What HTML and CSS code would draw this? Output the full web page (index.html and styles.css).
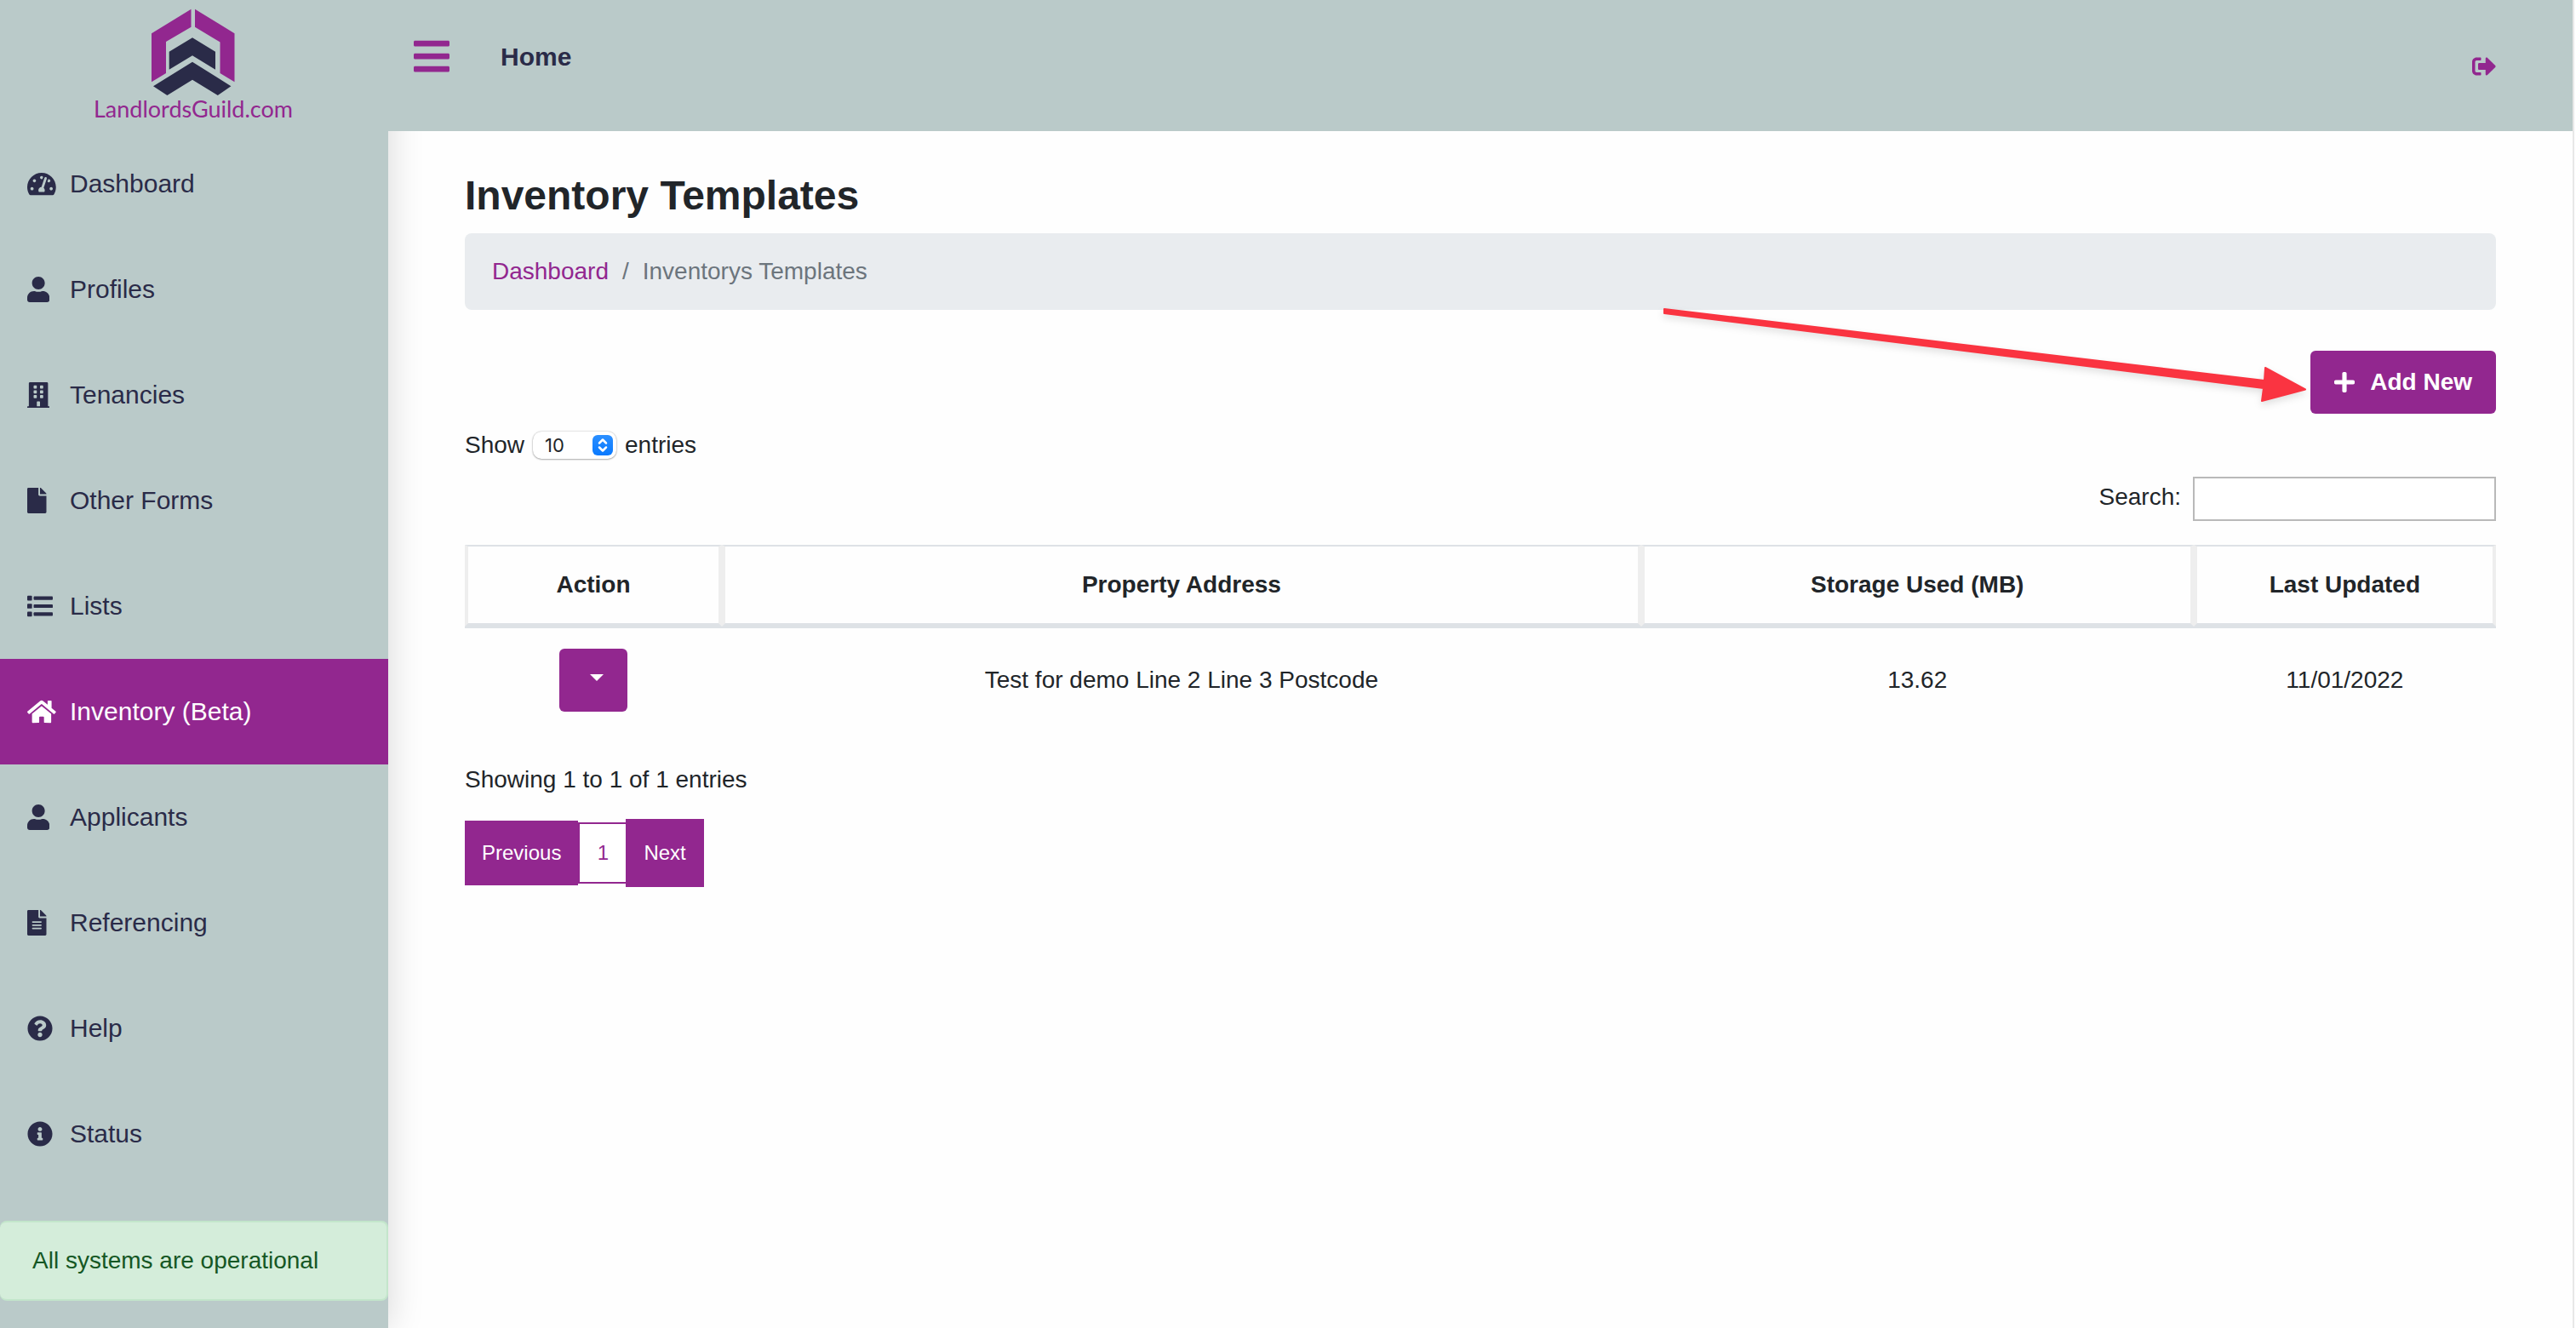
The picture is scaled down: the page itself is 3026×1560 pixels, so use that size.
FILE: index.html
```html
<!DOCTYPE html>
<html lang="en">
<head>
<meta charset="utf-8">
<meta name="viewport" content="width=device-width, initial-scale=1">
<title>Inventory Templates - LandlordsGuild.com</title>
<link rel="stylesheet" href="styles.css">
</head>
<body>
<div class="app">
  <aside class="sidebar">
    <a class="brand" href="#">
      <svg class="brand-mark" viewBox="178 10 98 102" aria-hidden="true">
        <path fill="#92278f" d="M178 39.3L224.5 10.7V31.7L195 49V86L178 96.3ZM229 10.7L275.5 39.3V96.3L258.5 86V49.5L229 31.7Z"/>
        <path fill="#2a2b48" d="M226 44.3L253 60.7V81.7L226 65.3L198.7 81.7V60.7ZM226 72.7L271.4 101.3L255.8 112L226 93.7L196.4 112L180 101.3Z"/>
      </svg>
      <span class="brand-name">LandlordsGuild.com</span>
    </a>
    <nav class="menu" aria-label="Main">
      <a class="menu-item" href="#">
        <span class="menu-icon"><svg class="icon" viewBox="0 0 576 512"><path d="M288 32C128.94 32 0 160.94 0 320c0 52.8 14.25 102.26 39.06 144.8 5.61 9.62 16.3 15.2 27.44 15.2h443c11.14 0 21.83-5.58 27.44-15.2C561.75 422.26 576 372.8 576 320c0-159.06-128.94-288-288-288zm0 64c14.71 0 26.58 10.13 30.32 23.65-1.11 2.26-2.64 4.23-3.45 6.67l-9.22 27.67c-5.13 3.49-10.97 6.01-17.64 6.01-17.67 0-32-14.33-32-32S270.33 96 288 96zM96 384c-17.67 0-32-14.33-32-32s14.33-32 32-32 32 14.33 32 32-14.33 32-32 32zm48-160c-17.67 0-32-14.33-32-32s14.33-32 32-32 32 14.33 32 32-14.33 32-32 32zm246.77-72.41l-61.33 184C343.13 347.33 352 364.54 352 384c0 11.72-3.38 22.55-8.88 32H232.88c-5.5-9.45-8.88-20.28-8.88-32 0-33.94 26.5-61.43 59.9-63.59l61.34-184.01c4.17-12.56 17.73-19.45 30.36-15.17 12.57 4.19 19.35 17.79 15.17 30.36zm14.66 57.2l15.52-46.55c3.47-1.29 7.13-2.23 11.05-2.23 17.67 0 32 14.33 32 32s-14.33 32-32 32c-11.38-.01-20.89-6.28-26.57-15.22zM480 384c-17.67 0-32-14.33-32-32s14.33-32 32-32 32 14.33 32 32-14.33 32-32 32z"/></svg></span>
        Dashboard
      </a>
      <a class="menu-item" href="#">
        <span class="menu-icon"><svg class="icon" viewBox="0 0 448 512"><path d="M224 256c70.7 0 128-57.3 128-128S294.7 0 224 0 96 57.3 96 128s57.3 128 128 128zm89.6 32h-16.7c-22.2 10.2-46.9 16-72.9 16s-50.6-5.8-72.9-16h-16.7C60.2 288 0 348.2 0 422.4V464c0 26.5 21.5 48 48 48h352c26.5 0 48-21.5 48-48v-41.6c0-74.2-60.2-134.4-134.4-134.4z"/></svg></span>
        Profiles
      </a>
      <a class="menu-item" href="#">
        <span class="menu-icon"><svg class="icon" viewBox="0 0 448 512"><path fill-rule="evenodd" d="M436 480h-20V24c0-13.255-10.745-24-24-24H56C42.745 0 32 10.745 32 24v456H12c-6.627 0-12 5.373-12 12v20h448v-20c0-6.627-5.373-12-12-12zM140 64h40q12 0 12 12v40q0 12-12 12h-40q-12 0-12-12V76q0-12 12-12zM268 64h40q12 0 12 12v40q0 12-12 12h-40q-12 0-12-12V76q0-12 12-12zM140 160h40q12 0 12 12v40q0 12-12 12h-40q-12 0-12-12v-40q0-12 12-12zM268 160h40q12 0 12 12v40q0 12-12 12h-40q-12 0-12-12v-40q0-12 12-12zM140 256h40q12 0 12 12v40q0 12-12 12h-40q-12 0-12-12v-40q0-12 12-12zM268 256h40q12 0 12 12v40q0 12-12 12h-40q-12 0-12-12v-40q0-12 12-12zM204 384h40q12 0 12 12v84h-64v-84q0-12 12-12z"/></svg></span>
        Tenancies
      </a>
      <a class="menu-item" href="#">
        <span class="menu-icon"><svg class="icon" viewBox="0 0 384 512"><path d="M224 136V0H24C10.7 0 0 10.7 0 24v464c0 13.3 10.7 24 24 24h336c13.3 0 24-10.7 24-24V160H248c-13.2 0-24-10.8-24-24zm160-14.1v6.1H256V0h6.1c6.4 0 12.5 2.5 17 7l97.9 98c4.5 4.5 7 10.6 7 16.9z"/></svg></span>
        Other Forms
      </a>
      <a class="menu-item" href="#">
        <span class="menu-icon"><svg class="icon" viewBox="0 0 512 512"><rect x="0" y="48" width="96" height="96" rx="16"/><rect x="0" y="208" width="96" height="96" rx="16"/><rect x="0" y="368" width="96" height="96" rx="16"/><rect x="128" y="60" width="384" height="72" rx="16"/><rect x="128" y="220" width="384" height="72" rx="16"/><rect x="128" y="380" width="384" height="72" rx="16"/></svg></span>
        Lists
      </a>
      <a class="menu-item is-active" href="#" aria-current="page">
        <span class="menu-icon"><svg class="icon" viewBox="0 0 576 512"><path d="M280.37 148.26L96 300.11V464a16 16 0 0 0 16 16l112.06-.29a16 16 0 0 0 15.92-16V368a16 16 0 0 1 16-16h64a16 16 0 0 1 16 16v95.64a16 16 0 0 0 16 16.05L464 480a16 16 0 0 0 16-16V300L295.67 148.26a12.19 12.19 0 0 0-15.3 0zM571.6 251.47L488 182.56V44.05a12 12 0 0 0-12-12h-56a12 12 0 0 0-12 12v72.61L318.47 43a48 48 0 0 0-61 0L4.34 251.47a12 12 0 0 0-1.6 16.9l25.5 31A12 12 0 0 0 45.15 301l235.22-193.74a12.19 12.19 0 0 1 15.3 0L530.9 301a12 12 0 0 0 16.9-1.6l25.5-31a12 12 0 0 0-1.7-16.93z"/></svg></span>
        Inventory (Beta)
      </a>
      <a class="menu-item" href="#">
        <span class="menu-icon"><svg class="icon" viewBox="0 0 448 512"><path d="M224 256c70.7 0 128-57.3 128-128S294.7 0 224 0 96 57.3 96 128s57.3 128 128 128zm89.6 32h-16.7c-22.2 10.2-46.9 16-72.9 16s-50.6-5.8-72.9-16h-16.7C60.2 288 0 348.2 0 422.4V464c0 26.5 21.5 48 48 48h352c26.5 0 48-21.5 48-48v-41.6c0-74.2-60.2-134.4-134.4-134.4z"/></svg></span>
        Applicants
      </a>
      <a class="menu-item" href="#">
        <span class="menu-icon"><svg class="icon" viewBox="0 0 384 512"><path d="M224 136V0H24C10.7 0 0 10.7 0 24v464c0 13.3 10.7 24 24 24h336c13.3 0 24-10.7 24-24V160H248c-13.2 0-24-10.8-24-24zm64 236c0 6.6-5.4 12-12 12H108c-6.6 0-12-5.4-12-12v-8c0-6.6 5.4-12 12-12h168c6.6 0 12 5.4 12 12v8zm0-64c0 6.6-5.4 12-12 12H108c-6.6 0-12-5.4-12-12v-8c0-6.6 5.4-12 12-12h168c6.6 0 12 5.4 12 12v8zm0-72v8c0 6.6-5.4 12-12 12H108c-6.6 0-12-5.4-12-12v-8c0-6.6 5.4-12 12-12h168c6.6 0 12 5.4 12 12zm96-114.1v6.1H256V0h6.1c6.4 0 12.5 2.5 17 7l97.9 98c4.5 4.5 7 10.6 7 16.9z"/></svg></span>
        Referencing
      </a>
      <a class="menu-item" href="#">
        <span class="menu-icon"><svg class="icon" viewBox="0 0 512 512"><path d="M504 256c0 136.997-111.043 248-248 248S8 392.997 8 256C8 119.083 119.043 8 256 8s248 111.083 248 248zM262.655 90c-54.497 0-89.255 22.957-116.549 63.758-3.536 5.286-2.353 12.415 2.715 16.258l34.699 26.31c5.205 3.947 12.621 3.008 16.665-2.122 17.864-22.658 30.113-35.797 57.303-35.797 20.429 0 45.698 13.148 45.698 32.958 0 14.976-12.363 22.667-32.534 33.976C247.128 238.528 216 254.941 216 296v4c0 6.627 5.373 12 12 12h56c6.627 0 12-5.373 12-12v-1.333c0-28.462 83.186-29.647 83.186-106.667 0-58.002-60.165-102-116.531-102zM256 338c-25.365 0-46 20.635-46 46 0 25.364 20.635 46 46 46s46-20.636 46-46c0-25.365-20.635-46-46-46z"/></svg></span>
        Help
      </a>
      <a class="menu-item" href="#">
        <span class="menu-icon"><svg class="icon" viewBox="0 0 512 512"><path d="M256 8C119.043 8 8 119.083 8 256c0 136.997 111.043 248 248 248s248-111.003 248-248C504 119.083 392.957 8 256 8zm0 110c23.196 0 42 18.804 42 42s-18.804 42-42 42-42-18.804-42-42 18.804-42 42-42zm56 254c0 6.627-5.373 12-12 12h-88c-6.627 0-12-5.373-12-12v-24c0-6.627 5.373-12 12-12h12v-64h-12c-6.627 0-12-5.373-12-12v-24c0-6.627 5.373-12 12-12h64c6.627 0 12 5.373 12 12v100h12c6.627 0 12 5.373 12 12v24z"/></svg></span>
        Status
      </a>
    </nav>
    <div class="alert" role="status">All systems are operational</div>
  </aside>

  <div class="page">
    <header class="topbar">
      <button class="menu-toggle" type="button" aria-label="Toggle menu">
        <svg class="icon-bars" viewBox="0 0 448 512"><path d="M16 132h416c8.837 0 16-7.163 16-16V76c0-8.837-7.163-16-16-16H16C7.163 60 0 67.163 0 76v40c0 8.837 7.163 16 16 16zm0 160h416c8.837 0 16-7.163 16-16v-40c0-8.837-7.163-16-16-16H16c-8.837 0-16 7.163-16 16v40c0 8.837 7.163 16 16 16zm0 160h416c8.837 0 16-7.163 16-16v-40c0-8.837-7.163-16-16-16H16c-8.837 0-16 7.163-16 16v40c0 8.837 7.163 16 16 16z"/></svg>
      </button>
      <a class="home-link" href="#">Home</a>
      <a class="logout" href="#" aria-label="Log out">
        <svg class="icon-logout" viewBox="0 0 512 512"><path d="M497 273L329 441c-15 15-41 4.5-41-17v-96H152c-13.3 0-24-10.7-24-24v-96c0-13.3 10.7-24 24-24h136V88c0-21.4 25.9-32 41-17l168 168c9.3 9.4 9.3 24.6 0 34zM192 436v-40c0-6.6-5.4-12-12-12H96c-17.7 0-32-14.3-32-32V160c0-17.7 14.3-32 32-32h84c6.6 0 12-5.4 12-12V76c0-6.6-5.4-12-12-12H96c-53 0-96 43-96 96v192c0 53 43 96 96 96h84c6.6 0 12-5.4 12-12z"/></svg>
      </a>
    </header>

    <main class="content">
      <h1 class="title">Inventory Templates</h1>
      <nav class="breadcrumb" aria-label="Breadcrumb">
        <a href="#">Dashboard</a>
        <span>/</span>
        <span>Inventorys Templates</span>
      </nav>

      <div class="actions">
        <button class="btn btn-add" type="button">
          <svg class="icon-plus" viewBox="0 0 448 512"><path d="M416 208H272V64c0-17.67-14.33-32-32-32h-32c-17.67 0-32 14.33-32 32v144H32c-17.67 0-32 14.33-32 32v32c0 17.67 14.33 32 32 32h144v144c0 17.67 14.33 32 32 32h32c17.67 0 32-14.33 32-32V304h144c17.67 0 32-14.33 32-32v-32c0-17.67-14.33-32-32-32z"/></svg>
          Add New
        </button>
        <svg class="pointer" viewBox="0 0 772 132" aria-hidden="true">
          <path d="M9 9L714 93L715 78L762 103.500L711 117L713 102L9 14Z" fill="#fa3441" stroke="#fa3441" stroke-width="2" stroke-linejoin="round"/>
        </svg>
      </div>

      <div class="length">
        <label for="length">Show</label>
        <span class="select">
          <select id="length"><option>10</option><option>25</option><option>50</option></select>
          <svg class="select-arrows" viewBox="0 0 24 24" aria-hidden="true"><path d="M8 9.500L12 5.500L16 9.500M8 14.500L12 18.500L16 14.500" fill="none" stroke="#fff" stroke-width="2.500" stroke-linecap="round" stroke-linejoin="round"/></svg>
        </span>
        <span>entries</span>
      </div>

      <div class="filter">
        <label for="search">Search:</label>
        <input id="search" type="search">
      </div>

      <table class="table">
        <colgroup><col class="col-action"><col class="col-address"><col class="col-storage"><col></colgroup>
        <thead>
          <tr><th>Action</th><th>Property Address</th><th>Storage Used (MB)</th><th>Last Updated</th></tr>
        </thead>
        <tbody>
          <tr>
            <td><button class="btn btn-menu" type="button" aria-label="Row actions"><span class="caret"></span></button></td>
            <td>Test for demo Line 2 Line 3 Postcode</td>
            <td>13.62</td>
            <td>11/01/2022</td>
          </tr>
        </tbody>
      </table>

      <p class="info">Showing 1 to 1 of 1 entries</p>
      <nav class="pager" aria-label="Pages">
        <button class="pager-prev" type="button">Previous</button>
        <button class="pager-page" type="button" aria-current="page">1</button>
        <button class="pager-next" type="button">Next</button>
      </nav>
    </main>
  </div>
</div>
</body>
</html>
```
FILE: styles.css
```css
:root {
  --purple: #92278f;
  --navy: #2a2b48;
  --bar: #bacac9;
  --text: #212529;
  --line: #dee2e6;
}

* { box-sizing: border-box; }

body {
  margin: 0;
  background: #fefefe;
  color: var(--text);
  font: 28px/42px "Liberation Sans", Arial, sans-serif;
}

a { text-decoration: none; }

button, input, select { font: inherit; }

button {
  margin: 0;
  border: 0;
  cursor: pointer;
}

svg { display: block; fill: currentColor; }

.app {
  display: grid;
  grid-template-columns: 456px 1fr;
  min-height: 100vh;
  margin-right: 2px;
  border-right: 2px solid #e8e8e8;
}

/* Sidebar */
.sidebar {
  background: var(--bar);
  box-shadow: 0 0 40px rgba(0, 0, 0, .16);
}

.brand {
  display: flex;
  flex-direction: column;
  align-items: center;
  height: 154px;
  padding: 10px 2px 0 0;
}

.brand-mark { width: 98px; height: 102px; }

.brand-name {
  color: var(--purple);
  font: 400 27px/32px Lato, sans-serif;
}

.menu-item {
  display: flex;
  align-items: center;
  height: 124px;
  padding-left: 32px;
  color: var(--navy);
  font-size: 30px;
}

.menu-item.is-active {
  background: var(--purple);
  color: #fff;
}

.menu-icon { width: 50px; }

.icon { height: 30px; }

.alert {
  margin-top: 40px;
  padding: 24px 36px 24px 38px;
  border: 2px solid #c3e6cb;
  border-left: 0;
  border-radius: 8px;
  background: #d4edda;
  color: #155724;
}

/* Top bar */
.page { min-width: 0; }

.topbar {
  position: relative;
  display: flex;
  align-items: flex-start;
  height: 154px;
  padding: 42px 90px 0 30px;
  background: var(--bar);
}

.menu-toggle {
  padding: 0;
  background: none;
  color: var(--purple);
}

.icon-bars { width: 42px; height: 48px; }

.home-link {
  margin-left: 60px;
  color: var(--navy);
  font-size: 30px;
  font-weight: bold;
  line-height: 50px;
}

.logout {
  margin-left: auto;
  padding-top: 22px;
  color: var(--purple);
}

.icon-logout { width: 28px; height: 28px; }

/* Content */
.content { padding: 48px 90px; }

.title {
  margin: 0 0 16px;
  font-size: 48px;
  line-height: 56px;
}

.breadcrumb {
  display: flex;
  gap: 16px;
  margin-bottom: 48px;
  padding: 24px 32px;
  border-radius: 8px;
  background: #e9ecef;
  color: #6c757d;
}

.breadcrumb a { color: var(--purple); }

.actions {
  position: relative;
  display: flex;
  justify-content: flex-end;
  margin-bottom: 16px;
}

.btn {
  height: 74px;
  border-radius: 6px;
  background: var(--purple);
  color: #fff;
}

.btn-add {
  display: flex;
  align-items: center;
  gap: 18px;
  padding: 0 28px;
  font-weight: bold;
}

.icon-plus { width: 24px; height: 28px; }

.pointer {
  position: absolute;
  right: 214px;
  bottom: 0;
  width: 772px;
  height: 132px;
  filter: drop-shadow(0 4px 4px rgba(0, 0, 0, .12));
  pointer-events: none;
}

.length {
  display: flex;
  align-items: center;
  gap: 10px;
  margin-bottom: 16px;
}

.select {
  position: relative;
  display: flex;
}

.select select {
  width: 98px;
  height: 32px;
  padding: 0 14px;
  border: 0;
  border-radius: 10px;
  background: #fff;
  box-shadow: 0 0 2px rgba(0, 0, 0, .3), 0 1px 2px rgba(0, 0, 0, .25);
  color: var(--text);
  font: 22px/32px Inter, sans-serif;
  appearance: none;
}

.select-arrows {
  position: absolute;
  top: 4px;
  right: 4px;
  width: 24px;
  height: 24px;
  border-radius: 6px;
  background: linear-gradient(#2b8fff, #0a7aff);
  pointer-events: none;
}

.filter {
  display: flex;
  justify-content: flex-end;
  gap: 14px;
  margin-bottom: 28px;
}

.filter label { line-height: 48px; }

.filter input {
  width: 356px;
  height: 52px;
  border: 2px solid #b9b9b9;
  border-radius: 0;
  background: #fff;
  appearance: none;
}

.table {
  width: 100%;
  border-spacing: 0;
  table-layout: fixed;
  text-align: center;
}

.col-action { width: 12.66%; }
.col-address { width: 45.25%; }
.col-storage { width: 27.2%; }

.table th {
  padding: 24px;
  border: 4px solid #eee;
  border-top: 2px solid var(--line);
  border-bottom-color: var(--line);
}

.table td {
  padding: 24px;
  border-top: 2px solid var(--line);
}

.btn-menu {
  width: 80px;
  padding: 0 0 6px 8px;
  vertical-align: top;
}

.caret {
  display: block;
  width: 0;
  margin: 0 auto;
  border: 8px solid transparent;
  border-top-color: #fff;
  border-bottom: 0;
}

.info { margin: 35px 0 25px; }

.pager {
  display: flex;
  align-items: center;
  font-size: 24px;
}

.pager-prev,
.pager-next {
  background: var(--purple);
  color: #fff;
}

.pager-prev {
  height: 76px;
  padding: 0 20px;
}

.pager-page {
  width: 56px;
  height: 72px;
  padding: 0;
  border: 2px solid var(--purple);
  border-right: 0;
  background: #fff;
  color: var(--purple);
}

.pager-next {
  height: 80px;
  padding: 0 21px;
}
```
